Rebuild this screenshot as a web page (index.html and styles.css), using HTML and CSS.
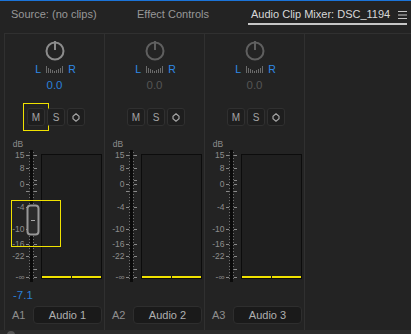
FILE: index.html
```html
<!DOCTYPE html>
<html lang="en">
<head>
  <meta charset="UTF-8">
  <meta name="viewport" content="width=device-width, initial-scale=1.0">
  <title>Audio Clip Mixer</title>
  <link rel="stylesheet" href="styles.css">
</head>
<body>
  <div class="panel">
    <div class="accent"></div>

    <nav class="tabs">
      <span class="tab tabSource">Source: (no clips)</span>
      <span class="tab tabEffects">Effect Controls</span>
      <span class="tab tabActive">
        <span>Audio Clip Mixer: DSC_1194</span>
        <svg class="menuIcon" width="9" height="8" viewBox="0 0 9 8">
          <path d="M0 0.5H9M0 4H9M0 7.5H9" stroke="#c4c4c4" stroke-width="1" />
        </svg>
      </span>
    </nav>

    <div class="mixer" id="mixer">
      <!-- channel strips are filled in by the script below -->
    </div>

    <div class="scrollbar"><span class="thumb"></span></div>
  </div>

  <script>
    const tracks = [
      { id: 'A1', name: 'Audio 1', pan: '0.0', gain: '-7.1', active: true },
      { id: 'A2', name: 'Audio 2', pan: '0.0', gain: '', active: false },
      { id: 'A3', name: 'Audio 3', pan: '0.0', gain: '', active: false }
    ];

    // dB marks on the fader scale, y in px from the top of the meter area
    const marks = [
      { label: '15', y: 14.7 },
      { label: '8', y: 27.7 },
      { label: '', y: 40, right: true },
      { label: '0', y: 44 },
      { label: '', y: 51 },
      { label: '-4', y: 66.7 },
      { label: '-10', y: 89 },
      { label: '-16', y: 104 },
      { label: '-22', y: 115.7 },
      { label: '', y: 129, right: true },
      { label: '-\u221e', y: 136.7 }
    ];

    function knob(active) {
      const c = active ? '#8c8c8c' : '#5f5f5f';
      return `
        <svg width="22" height="22" viewBox="0 0 22 22">
          <circle cx="11" cy="12" r="8.5" fill="none" stroke="${c}" stroke-width="2" />
          <line x1="11" y1="2" x2="11" y2="11" stroke="${c}" stroke-width="2" />
        </svg>`;
    }

    function panTicks() {
      const h = [7, 5, 4, 3, 2, 3, 4, 5, 7];
      const lines = h.map((v, i) =>
        `<line x1="${i * 2 + 0.5}" y1="${7 - v}" x2="${i * 2 + 0.5}" y2="7" />`).join('');
      return `<svg class="panTicks" width="17" height="7" viewBox="0 0 17 7">${lines}</svg>`;
    }

    function scale(active) {
      const labels = marks.filter(m => m.label).map(m =>
        `<text x="19.5" y="${(m.y + 3).toFixed(1)}" text-anchor="end">${m.label}</text>`).join('');
      const ticks = marks.map(m => {
        const y = Math.round(m.y) + 0.5;
        const left = m.right ? '' : `<line x1="21" y1="${y}" x2="24" y2="${y}" />`;
        return left + `<line x1="29" y1="${y}" x2="32" y2="${y}" />`;
      }).join('');
      const handle = active ? `
          <rect x="22.5" y="65.5" width="11" height="29" rx="3" fill="#2a2a2a" stroke="#979797" stroke-width="2" />
          <line x1="26" y1="80.5" x2="30" y2="80.5" stroke="#a8a8a8" />` : '';
      return `
        <svg class="scale" width="36" height="144" viewBox="0 0 36 144">
          <text class="dbLabel" x="7.7" y="7.3">dB</text>
          ${labels}
          <g class="dots">
            <line x1="24.5" y1="12" x2="24.5" y2="140" />
            <line x1="28.5" y1="12" x2="28.5" y2="140" />
          </g>
          <rect x="25" y="10" width="3" height="132" fill="#0b0b0b" />
          <g class="ticks">${ticks}</g>
          ${handle}
        </svg>`;
    }

    function renderStrips() {
      const mixer = document.getElementById('mixer');
      mixer.innerHTML = tracks.map(t => `
        <section class="strip ${t.active ? 'isActive' : ''}">
          <div class="knobRow">${knob(t.active)}</div>
          <div class="panRow">
            <span class="panSide">L</span>
            ${panTicks()}
            <span class="panSide">R</span>
          </div>
          <div class="panValue">${t.pan}</div>
          <div class="buttons">
            <span class="btn ${t.active ? 'focused' : ''}">M</span>
            <span class="btn">S</span>
            <span class="btn">
              <svg width="8" height="9" viewBox="0 0 8 9">
                <path d="M4 0.8L7 3.2V5.8L4 8.2L1 5.8V3.2Z" fill="none" stroke="#a4a4a4" stroke-width="1.2" />
              </svg>
            </span>
          </div>
          <div class="meter">
            ${scale(t.active)}
            <div class="bars">
              <span class="bar"></span>
              <span class="bar"></span>
            </div>
            ${t.active ? '<span class="faderFocus"></span>' : ''}
          </div>
          <div class="gain">${t.gain}</div>
          <div class="trackRow">
            <span class="trackId">${t.id}</span>
            <span class="trackName">${t.name}</span>
          </div>
        </section>
      `).join('');
    }

    renderStrips();
  </script>
</body>
</html>
```

FILE: styles.css
```css
html, body {
  margin: 0;
  padding: 0;
  background-color: #232323;
  font-family: 'Liberation Sans', Arial, sans-serif;
  color: #9a9a9a;
}

.panel {
  width: 411px;
  height: 334px;
  overflow: hidden;
  display: flex;
  flex-direction: column;
}

.accent {
  height: 1px;
  background-color: #1b74d9;
}

/* tab bar */
.tabs {
  height: 32px;
  box-sizing: border-box;
  padding: 7px 0 0 11px;
  display: flex;
  align-items: flex-start;
  font-size: 11px;
  line-height: 13px;
  white-space: nowrap;
}

.tab {
  color: #989898;
}

.tabSource {
  width: 126px;
}

.tabEffects {
  width: 111px;
}

.tabActive {
  width: 159px;
  box-sizing: border-box;
  padding: 0 0 2px 3px;
  border-bottom: 2px solid #c6c6c6;
  color: #d8d8d8;
  display: flex;
  justify-content: space-between;
  align-items: center;
}

.menuIcon {
  margin-top: 1px;
}

/* mixer strips */
.mixer {
  height: 297px;
  box-sizing: border-box;
  margin-left: 4px;
  border-top: 1px solid #303030;
  display: flex;
}

.strip {
  width: 100px;
  box-sizing: border-box;
  border-left: 1px solid #303030;
  display: flex;
  flex-direction: column;
}

.strip:last-child {
  width: 101px;
  border-right: 1px solid #303030;
}

.knobRow {
  height: 30px;
  box-sizing: border-box;
  padding-top: 5px;
  display: flex;
  justify-content: center;
}

.panRow {
  height: 10px;
  padding-left: 2px;
  display: flex;
  justify-content: center;
  align-items: center;
  gap: 5px;
}

.panSide {
  font-size: 10.5px;
  line-height: 10px;
  color: #2f8ae8;
}

.panTicks line {
  stroke: #6b6b6b;
  stroke-width: 1;
}

.panValue {
  height: 22px;
  line-height: 22px;
  text-align: center;
  font-size: 11.5px;
  color: #555555;
}

.isActive .panValue {
  color: #2a7fd8;
}

.buttons {
  margin-top: 12px;
  padding-left: 22px;
  display: flex;
  gap: 2px;
}

.btn {
  position: relative;
  width: 18px;
  height: 18px;
  box-sizing: border-box;
  border: 1px solid #303030;
  border-radius: 3px;
  background-color: #1e1e1e;
  color: #a4a4a4;
  font-size: 10px;
  display: flex;
  justify-content: center;
  align-items: center;
}

.btn.focused::after {
  content: '';
  position: absolute;
  left: -5px;
  right: -5px;
  top: -6px;
  bottom: -6px;
  border: 1px solid #f0e200;
}

.meter {
  position: relative;
  margin-top: 14px;
  height: 144px;
  display: flex;
  align-items: flex-start;
}

.scale text {
  font-size: 8.5px;
  fill: #8d8d8d;
}

.ticks line {
  stroke: #8a8a8a;
  stroke-width: 1;
}

.dots line {
  stroke: #6e6e6e;
  stroke-width: 1;
  stroke-dasharray: 1 2;
}

.bars {
  margin-top: 14px;
  width: 61px;
  height: 125px;
  box-sizing: border-box;
  border: 1px solid #0c0c0c;
  background-color: #1f1f1f;
  display: flex;
  align-items: flex-end;
  gap: 1px;
}

.bar {
  flex: 1;
  height: 2px;
  background-color: #f0e200;
}

.faderFocus {
  position: absolute;
  left: 6px;
  top: 60px;
  width: 50px;
  height: 47px;
  box-sizing: border-box;
  border: 1px solid #f0e200;
}

.gain {
  height: 22px;
  line-height: 22px;
  padding-left: 8px;
  font-size: 11.5px;
  color: #2a7fd8;
}

.trackRow {
  height: 18px;
  display: flex;
  align-items: center;
}

.trackId {
  width: 21px;
  padding-left: 7px;
  font-size: 11px;
  color: #8e8e8e;
}

.trackName {
  width: 69px;
  height: 18px;
  box-sizing: border-box;
  border: 1px solid #2e2e2e;
  border-radius: 4px;
  background-color: #1a1a1a;
  color: #b0b0b0;
  font-size: 11px;
  line-height: 16px;
  text-align: center;
}

/* bottom scrollbar */
.scrollbar {
  height: 4px;
  background-color: #2c2c2c;
  overflow: hidden;
}

.thumb {
  display: block;
  width: 8px;
  height: 8px;
  margin: 1px 0 0 7px;
  border-radius: 50%;
  background-color: #555555;
}
```
